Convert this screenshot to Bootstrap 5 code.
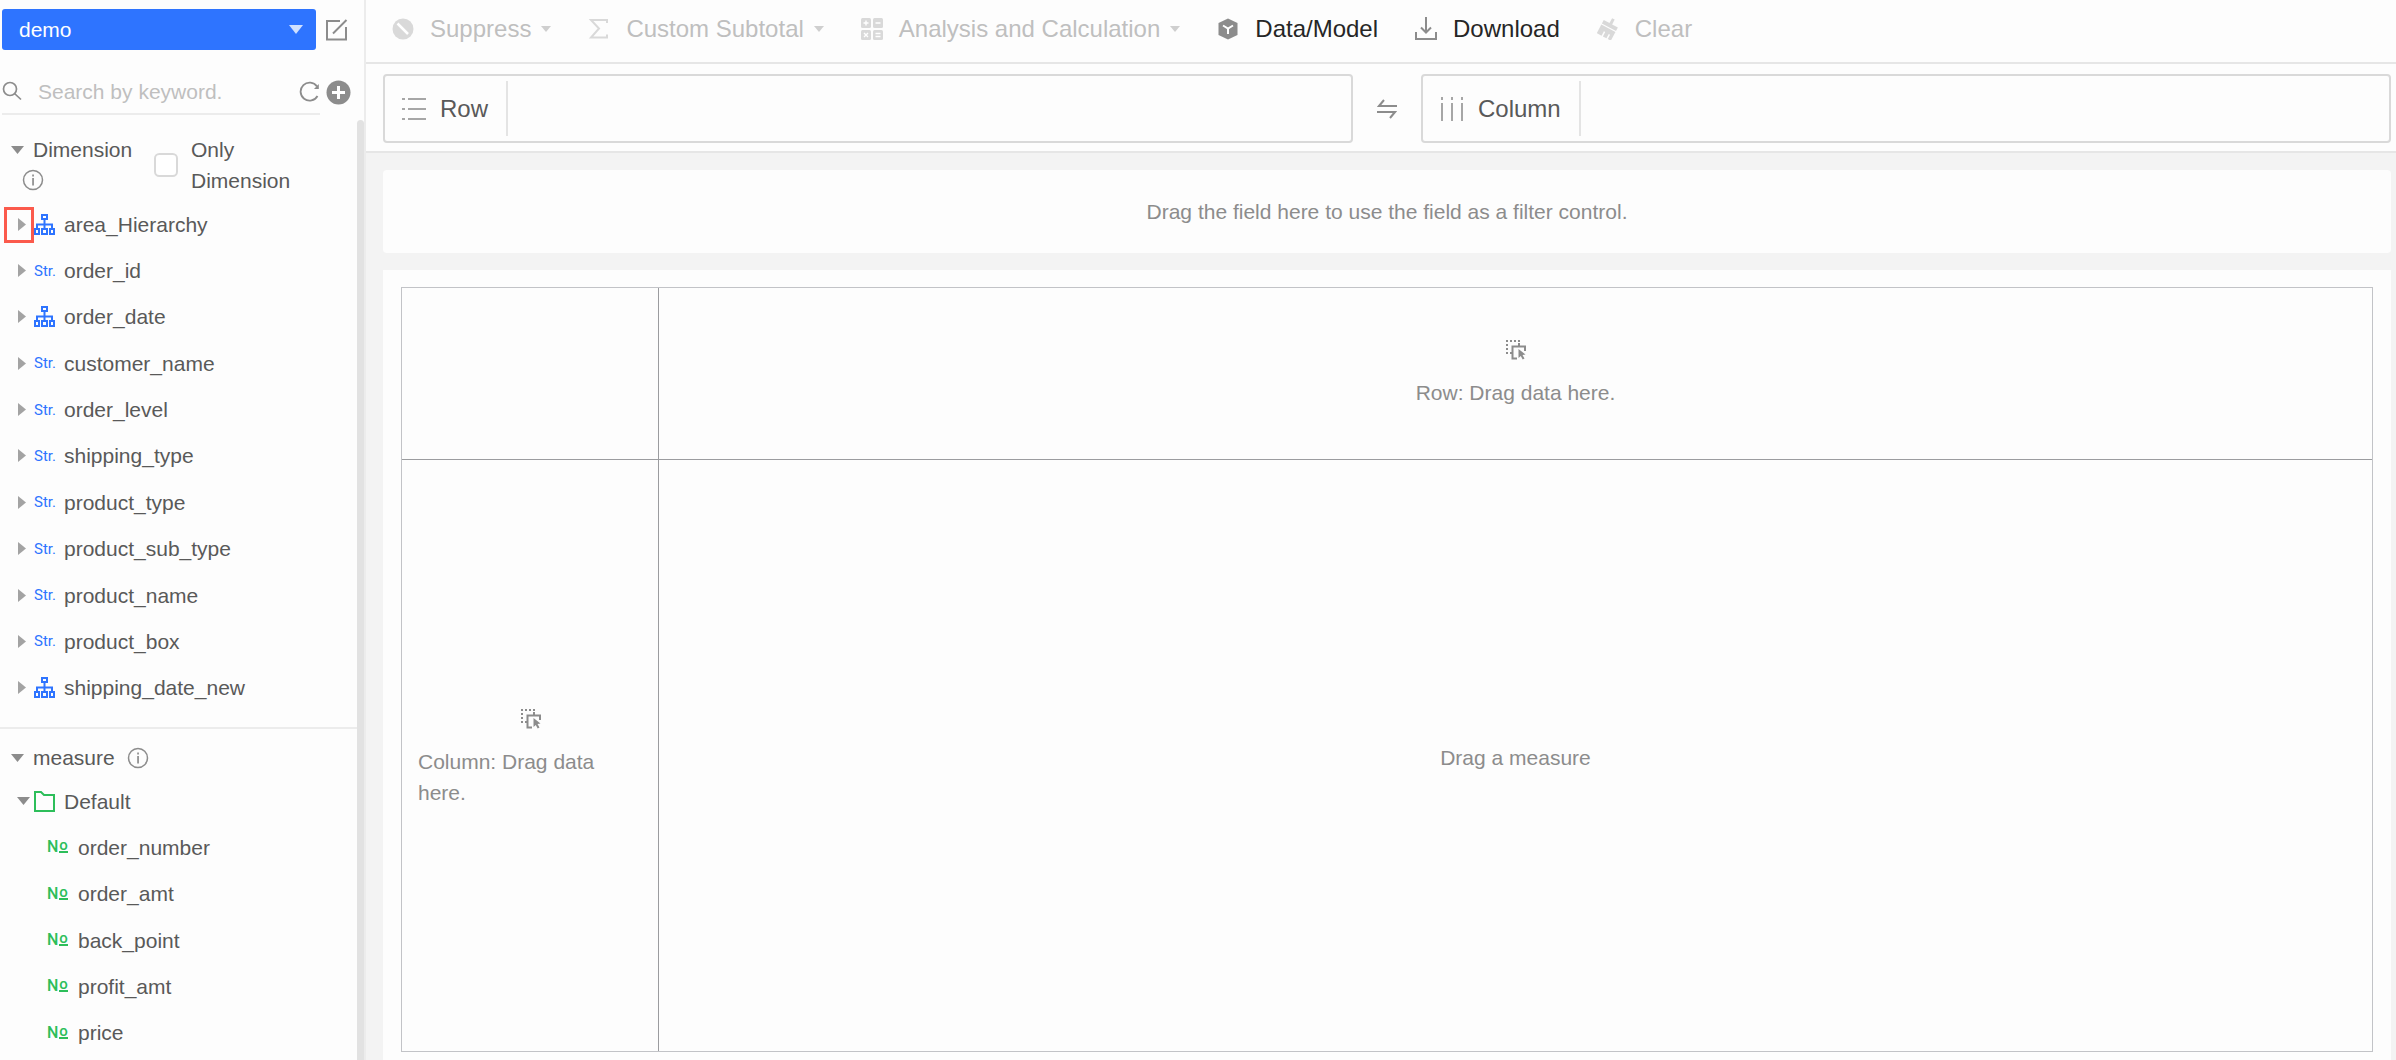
<!DOCTYPE html>
<html lang="en">
<head>
<meta charset="utf-8">
<meta name="viewport" content="width=device-width, initial-scale=1">
<title>demo</title>
<link rel="stylesheet" href="https://cdn.jsdelivr.net/npm/bootstrap@5.3.0/dist/css/bootstrap.min.css">
<style>
  body { font-family: "Liberation Sans", Arial, sans-serif; font-size: 21px; line-height: 31px; color: #595959; background: #fdfdfd; }
  svg { display: block; flex: none; }
  button { font: inherit; color: inherit; background: none; border: 0; padding: 0; }

  /* Sidebar */
  .side { width: 366px; border-right: 2px solid #ececec; padding-top: 9px; }
  .side-top { padding-left: 2px; gap: 10px; }
  .dataset { width: 314px; height: 41px; }
  .dataset select { appearance: none; width: 100%; height: 100%; border: 0; border-radius: 3px; background: #2e74ff; color: #fff; padding: 0 17px; }
  .dataset svg { position: absolute; right: 13px; top: 16px; pointer-events: none; }
  .finder { margin: 19px 0 5px 2px; height: 46px; gap: 6px; }
  .finder-box { width: 318px; border-bottom: 2px solid #ececec; }
  .finder-box input { border: 0; background: none; outline: 0; padding: 0; margin-left: 16px; min-width: 0; color: #595959; }
  .finder-box input::placeholder { color: #bfbfbf; opacity: 1; }
  .thumb { width: 7px; background: #e2e2e2; border-radius: 4px 4px 0 0; }
  .dim-head { padding: 14px 0 5px 11px; }
  .dim-title { width: 143px; }
  .dim-title .fold, .measure-head .fold { gap: 9px; }
  .dim-info { padding: 4px 0 0 11px; }
  .only input { width: 24px; height: 24px; margin: 0; border: 2px solid #d9d9d9; border-radius: 4px; background-color: #fff; }
  .only { gap: 13px; }
  .only label { width: 110px; }
  .dim-list { height: 510px; }
  .measure-list { height: 278px; }
  .dim-list li, .measure-list li { flex: 1 1 0; padding-left: 17px; }
  .measure-list li.leaf { padding-left: 47px; }
  .twist { width: 17px; }
  .kind { width: 30px; }
  .leaf .kind { width: 31px; }
  .str { font: 15px/22px Roboto, sans-serif; color: #2e74ff; }
  .num { font: 500 16px/22px Roboto, sans-serif; color: #2dbe5a; gap: 1px; }
  .num b { font-size: 15px; font-weight: 500; line-height: 8px; padding-bottom: 2px; border-bottom: 2px solid #2dbe5a; }
  .marker { position: absolute; left: 4px; top: 6px; width: 30px; height: 36px; border: 3px solid #fb5a4c; }
  .measure-block { margin-top: 16px; border-top: 2px solid #ececec; }
  .measure-head { padding: 13px 0 5px 11px; gap: 12px; }

  /* Toolbar and drop zones */
  .tools { height: 64px; padding: 0 26px 5px; gap: 37px; font-size: 24px; color: #262626; border-bottom: 2px solid #e6e6e6; }
  .tools button { gap: 16px; }
  .tools button:disabled { color: #bfbfbf; }
  .tools .drop { gap: 10px; }
  .zones { padding: 10px 5px 8px 17px; border-bottom: 2px solid #e6e6e6; font-size: 24px; }
  .zone { flex: 1 1 0; height: 69px; border: 2px solid #d9d9d9; border-radius: 4px; padding: 5px 0 5px 17px; }
  .zone-name { gap: 14px; padding-right: 18px; border-right: 2px solid #e4e4e4; }
  .swap { width: 68px; }

  /* Work area */
  .work { background: #f3f3f3; padding: 17px 5px 0 17px; gap: 17px; color: #8c8c8c; }
  .filter { height: 83px; border-radius: 4px; background: #fdfdfd; }
  .sheet { background: #fdfdfd; padding: 17px 18px 8px; }
  .pivot { display: grid; grid-template-columns: 257px 1fr; grid-template-rows: 172px 1fr; border: 1px solid #c2c3c7; }
  .pivot > div { gap: 17px; }
  .pivot .corner, .pivot .col-area { border-right: 1px solid #9b9c9f; }
  .pivot .corner, .pivot .row-area { border-bottom: 1px solid #9b9c9f; }
  .pivot .col-area { padding: 4px 16px 0; }
  .pivot .measure-area { padding-top: 4px; }
</style>
<script src="https://cdn.jsdelivr.net/npm/bootstrap@5.3.0/dist/js/bootstrap.bundle.min.js"></script>
</head>
<body>
<svg width="0" height="0" class="position-absolute" aria-hidden="true">
  <symbol id="tree" viewBox="0 0 21 21"><g fill="none" stroke="#2e74ff" stroke-width="2"><path d="M8 1h5v4H8zM1 15h4v5H1zM8 15h5v5H8zM16 15h4v5h-4zM10.500 5v10M3 15v-4.500h15V15"/></g></symbol>
  <symbol id="right" viewBox="0 0 9 13"><path d="M1 0l8 6.500L1 13z" fill="#a3a3a3"/></symbol>
  <symbol id="down" viewBox="0 0 13 8"><path d="M0 0h13L6.500 8z" fill="#8c8c8c"/></symbol>
  <symbol id="info" viewBox="0 0 22 22"><circle cx="11" cy="11" r="9.500" fill="none" stroke="#8c8c8c" stroke-width="1.500"/><path d="M10.200 5.500h1.700v1.900h-1.700zM10.200 9h1.700v7.500h-1.700z" fill="#8c8c8c"/></symbol>
  <symbol id="caret" viewBox="0 0 10 6"><path d="M0 0h10L5 6z" fill="#cfcfcf"/></symbol>
  <symbol id="drag" viewBox="0 0 21 21"><path d="M1 2h14M2 5v11" fill="none" stroke="#8c8c8c" stroke-width="2" stroke-dasharray="2 2"/><path d="M14 4v3M5 14h3M12 19.500H7.500V7.500h12.500V12" fill="none" stroke="#8c8c8c" stroke-width="2"/><path d="M13.500 10l7 5.500-3 .5 2 3.500-1.800 1-1.900-3.400-2.300 2z" fill="#8c8c8c"/></symbol>
</svg>

<div class="d-flex min-vh-100">
  <aside class="side d-flex flex-column flex-shrink-0">
    <div class="side-top d-flex align-items-center">
      <div class="dataset position-relative">
        <select aria-label="Dataset"><option>demo</option></select>
        <svg width="14" height="9" viewBox="0 0 14 9"><path d="M0 0h14L7 9z" fill="#cfe0ff"/></svg>
      </div>
      <button type="button" aria-label="Edit dataset"><svg width="22" height="22" viewBox="0 0 22 22" fill="none" stroke="#8c8c8c" stroke-width="2"><path d="M14 2H1v18.500h19V8M20.500 1L7 14.500"/></svg></button>
    </div>

    <div class="finder d-flex align-items-center">
      <div class="finder-box d-flex align-items-center h-100">
        <svg width="20" height="20" viewBox="0 0 20 20" fill="none" stroke="#8c8c8c" stroke-width="1.700"><circle cx="8" cy="8" r="6.500"/><path d="M12.500 12.500l6.500 6"/></svg>
        <input type="text" class="flex-grow-1" placeholder="Search by keyword." aria-label="Search by keyword.">
        <button type="button" aria-label="Refresh"><svg width="21" height="21" viewBox="0 0 21 21"><path d="M18 5.500A9 9 0 1 0 18.500 15" fill="none" stroke="#8c8c8c" stroke-width="1.800"/><path d="M19.800 3v5H15z" fill="#8c8c8c"/></svg></button>
      </div>
      <button type="button" aria-label="Add field"><svg width="25" height="25" viewBox="0 0 25 25"><circle cx="12.500" cy="12.500" r="12" fill="#8c8c8c"/><path d="M12.500 6v13M6 12.500h13" stroke="#fff" stroke-width="3"/></svg></button>
    </div>

    <div class="d-flex flex-grow-1">
      <div class="flex-grow-1">
        <div class="dim-head d-flex align-items-start">
          <div class="dim-title">
            <button type="button" class="fold d-flex align-items-center"><svg width="13" height="8"><use href="#down"/></svg>Dimension</button>
            <div class="dim-info"><svg width="22" height="22"><use href="#info"/></svg></div>
          </div>
          <div class="only d-flex align-items-center">
            <input class="form-check-input" type="checkbox" id="only"><label for="only">Only Dimension</label>
          </div>
        </div>
        <ul class="dim-list list-unstyled d-flex flex-column mb-0">
          <li class="d-flex align-items-center position-relative"><span class="marker"></span><span class="twist"><svg width="9" height="13"><use href="#right"/></svg></span><span class="kind"><svg width="21" height="21"><use href="#tree"/></svg></span>area_Hierarchy</li>
          <li class="d-flex align-items-center"><span class="twist"><svg width="9" height="13"><use href="#right"/></svg></span><span class="kind str">Str.</span>order_id</li>
          <li class="d-flex align-items-center"><span class="twist"><svg width="9" height="13"><use href="#right"/></svg></span><span class="kind"><svg width="21" height="21"><use href="#tree"/></svg></span>order_date</li>
          <li class="d-flex align-items-center"><span class="twist"><svg width="9" height="13"><use href="#right"/></svg></span><span class="kind str">Str.</span>customer_name</li>
          <li class="d-flex align-items-center"><span class="twist"><svg width="9" height="13"><use href="#right"/></svg></span><span class="kind str">Str.</span>order_level</li>
          <li class="d-flex align-items-center"><span class="twist"><svg width="9" height="13"><use href="#right"/></svg></span><span class="kind str">Str.</span>shipping_type</li>
          <li class="d-flex align-items-center"><span class="twist"><svg width="9" height="13"><use href="#right"/></svg></span><span class="kind str">Str.</span>product_type</li>
          <li class="d-flex align-items-center"><span class="twist"><svg width="9" height="13"><use href="#right"/></svg></span><span class="kind str">Str.</span>product_sub_type</li>
          <li class="d-flex align-items-center"><span class="twist"><svg width="9" height="13"><use href="#right"/></svg></span><span class="kind str">Str.</span>product_name</li>
          <li class="d-flex align-items-center"><span class="twist"><svg width="9" height="13"><use href="#right"/></svg></span><span class="kind str">Str.</span>product_box</li>
          <li class="d-flex align-items-center"><span class="twist"><svg width="9" height="13"><use href="#right"/></svg></span><span class="kind"><svg width="21" height="21"><use href="#tree"/></svg></span>shipping_date_new</li>
        </ul>
        <div class="measure-block">
          <div class="measure-head d-flex align-items-center">
            <button type="button" class="fold d-flex align-items-center"><svg width="13" height="8"><use href="#down"/></svg>measure</button>
            <svg width="22" height="22"><use href="#info"/></svg>
          </div>
          <ul class="measure-list list-unstyled d-flex flex-column mb-0">
            <li class="d-flex align-items-center"><span class="twist"><svg width="13" height="8"><use href="#down"/></svg></span><span class="kind"><svg width="21" height="21" viewBox="0 0 21 21"><path d="M1 20V1h6l3 3h10v16z" fill="none" stroke="#2dbe5a" stroke-width="2"/></svg></span>Default</li>
            <li class="leaf d-flex align-items-center"><span class="kind num d-flex align-items-center">N<b>o</b></span>order_number</li>
            <li class="leaf d-flex align-items-center"><span class="kind num d-flex align-items-center">N<b>o</b></span>order_amt</li>
            <li class="leaf d-flex align-items-center"><span class="kind num d-flex align-items-center">N<b>o</b></span>back_point</li>
            <li class="leaf d-flex align-items-center"><span class="kind num d-flex align-items-center">N<b>o</b></span>profit_amt</li>
            <li class="leaf d-flex align-items-center"><span class="kind num d-flex align-items-center">N<b>o</b></span>price</li>
          </ul>
        </div>
      </div>
      <div class="thumb"></div>
    </div>
  </aside>

  <main class="d-flex flex-column flex-grow-1">
    <div class="tools d-flex align-items-center">
      <button type="button" class="d-flex align-items-center" disabled><svg width="22" height="22" viewBox="0 0 22 22"><circle cx="11" cy="11" r="10.500" fill="#d9d9d9"/><path d="M5.500 5.500l10.500 10.500" stroke="#fff" stroke-width="2.500"/></svg><span class="drop d-flex align-items-center">Suppress<svg width="10" height="6"><use href="#caret"/></svg></span></button>
      <button type="button" class="d-flex align-items-center" disabled><svg width="22" height="22" viewBox="0 0 22 22"><path d="M19 5V2H3l8 8.500L3 19.500h16v-3" fill="none" stroke="#d9d9d9" stroke-width="2"/></svg><span class="drop d-flex align-items-center">Custom Subtotal<svg width="10" height="6"><use href="#caret"/></svg></span></button>
      <button type="button" class="d-flex align-items-center" disabled><svg width="22" height="22" viewBox="0 0 22 22"><g fill="#d9d9d9"><rect width="10" height="10" rx="1.500"/><rect x="12" width="10" height="10" rx="1.500"/><rect y="12" width="10" height="10" rx="1.500"/><rect x="12" y="12" width="10" height="10" rx="1.500"/></g><path d="M5 2.500v5M2.500 5h5M14.500 5h5M3 15l4 4M7 15l-4 4M14.500 15.500h5M14.500 18.500h5" stroke="#fff" stroke-width="1.400"/></svg><span class="drop d-flex align-items-center">Analysis and Calculation<svg width="10" height="6"><use href="#caret"/></svg></span></button>
      <button type="button" class="d-flex align-items-center"><svg width="22" height="22" viewBox="0 0 22 22"><path d="M11 .5l9.500 4.500v12L11 21.500 1.500 17V5z" fill="#8c8c8c"/><path d="M6 7.500l5 3 5-3M11 10.500V16" fill="none" stroke="#fff" stroke-width="2"/></svg>Data/Model</button>
      <button type="button" class="d-flex align-items-center"><svg width="22" height="24" viewBox="0 0 22 24"><path d="M11 0v15M6 10.500l5 5 5-5M1 15v7h20v-7" fill="none" stroke="#8c8c8c" stroke-width="2"/></svg>Download</button>
      <button type="button" class="d-flex align-items-center" disabled><svg width="22" height="22" viewBox="0 0 22 22"><path transform="rotate(28 11 11)" d="M9.500-.5h3V5H19v4H3V5h6.500zM3 10.200h16V20h-3.500v-5H14v5h-4v-5H8.500v5H3z" fill="#d9d9d9"/></svg>Clear</button>
    </div>

    <div class="zones d-flex align-items-center">
      <div class="zone d-flex">
        <div class="zone-name d-flex align-items-center"><svg width="24" height="24" viewBox="0 0 24 24"><path d="M0 2h3M6 2h18M0 12h3M6 12h18M0 22h3M6 22h18" stroke="#a6a6a6" stroke-width="2"/></svg>Row</div>
      </div>
      <button type="button" class="swap d-flex justify-content-center" aria-label="Swap rows and columns"><svg width="20" height="20" viewBox="0 0 20 20"><path d="M20 7H2l5-6M0 13h18l-5 6" fill="none" stroke="#8c8c8c" stroke-width="2"/></svg></button>
      <div class="zone d-flex">
        <div class="zone-name d-flex align-items-center"><svg width="24" height="24" viewBox="0 0 24 24"><path d="M2 0v3M2 6v18M12 0v3M12 6v18M22 0v3M22 6v18" stroke="#a6a6a6" stroke-width="2"/></svg>Column</div>
      </div>
    </div>

    <div class="work d-flex flex-column flex-grow-1">
      <div class="filter d-flex align-items-center justify-content-center">Drag the field here to use the field as a filter control.</div>
      <div class="sheet d-flex flex-grow-1">
        <div class="pivot flex-grow-1">
          <div class="corner"></div>
          <div class="row-area d-flex flex-column align-items-center justify-content-center"><svg width="21" height="21"><use href="#drag"/></svg><span>Row: Drag data here.</span></div>
          <div class="col-area d-flex flex-column align-items-center justify-content-center"><svg width="21" height="21"><use href="#drag"/></svg><span>Column: Drag data here.</span></div>
          <div class="measure-area d-flex align-items-center justify-content-center">Drag a measure</div>
        </div>
      </div>
    </div>
  </main>
</div>
</body>
</html>
